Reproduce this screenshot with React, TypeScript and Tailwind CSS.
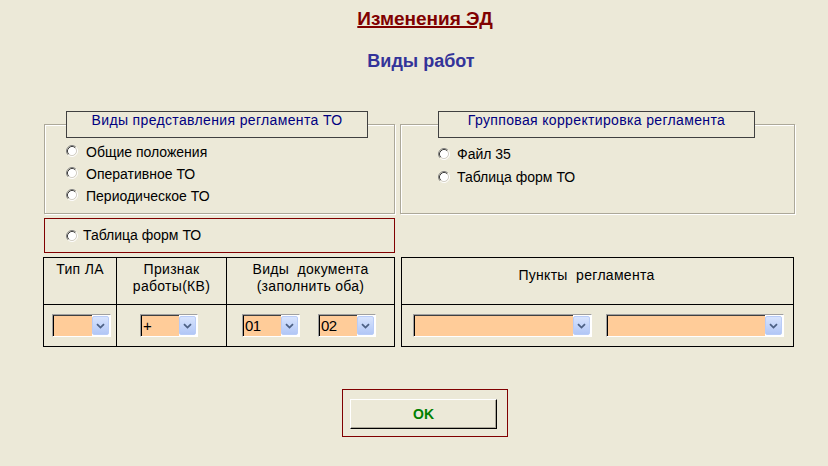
import React from 'react';

// Classic XP-like radio button
const Radio = ({ className = '' }: { className?: string }) => (
    <svg width="12" height="12" viewBox="0 0 12 12" className={`shrink-0 ${className}`}>
        <circle cx="6" cy="6" r="4.2" fill="#fff" />
        <path d="M2.11 9.89 A5.5 5.5 0 0 1 9.89 2.11" fill="none" stroke="#808080" />
        <path d="M9.89 2.11 A5.5 5.5 0 0 1 2.11 9.89" fill="none" stroke="#fff" />
        <path d="M2.82 9.18 A4.5 4.5 0 0 1 9.18 2.82" fill="none" stroke="#404040" />
        <path d="M9.18 2.82 A4.5 4.5 0 0 1 2.82 9.18" fill="none" stroke="#D4D0C8" />
    </svg>
);

// Combo box with peach field and blue drop button
const Combo = ({ w, value = '' }: { w: string; value?: string }) => (
    <div className={`flex h-[23px] ${w} border border-t-[#A0A0A0] border-l-[#A0A0A0] border-b-white border-r-white bg-white`}>
        <div className="flex-1 bg-[#FFCC99] border-t border-l border-t-[#404040] border-l-black pl-px text-[15px] leading-[20px] tracking-[-0.5px] text-black overflow-hidden">
            {value}
        </div>
        <div className="w-[17px] my-px mr-px flex items-center justify-center rounded-[2px] border border-[#B9CCF7] bg-linear-to-b from-[#D8E4FD] to-[#B2C7F6]">
            <svg width="9" height="6" viewBox="0 0 9 6">
                <path d="M1 1.2 L4.5 4.6 L8 1.2" fill="none" stroke="#4D6185" strokeWidth="1.8" />
            </svg>
        </div>
    </div>
);

const cell = 'bg-[#ECE9D8]';

export default function App() {
    return (
        <div className="w-[828px] h-[466px] overflow-hidden bg-[#ECE9D8] font-['Liberation_Sans',Arial,sans-serif] text-black">
            <div className="ml-[44px] w-[762px]">
                {/* Titles */}
                <div className="pt-[8px] text-center text-[19px] leading-[21px] font-bold text-[#800000]">
                    <span className="underline decoration-2 underline-offset-[1px] decoration-[#800000]">Изменения ЭД</span>
                </div>
                <div className="mt-[22px] pr-[8px] text-center text-[18px] leading-[21px] font-bold text-[#333399]">
                    Виды работ
                </div>

                <div className="mt-[39px] grid grid-cols-[351px_395px] gap-x-[5px] gap-y-[4px] text-[14px]">
                    {/* Left group */}
                    <fieldset className="border border-[#ACA899] shadow-[inset_1px_1px_0_#fff,1px_1px_0_#fff]">
                        <legend className="ml-[21px] w-[302px] h-[27px] border border-[#404040] bg-[#ECE9D8] text-left">
                            <div className="text-center text-[14px] leading-[17px] tracking-[0.35px] text-[#000080]">Виды представления регламента ТО</div>
                        </legend>
                        <div className="pl-[21px] pt-[3px] pb-[6px] leading-[22px]">
                            {['Общие положения', 'Оперативное ТО', 'Периодическое ТО'].map((t) => (
                                <div key={t} className="flex items-center gap-[8px]">
                                    <Radio className="mb-[2px]" />
                                    <span>{t}</span>
                                </div>
                            ))}
                        </div>
                    </fieldset>

                    {/* Right group */}
                    <fieldset className="border border-[#ACA899] shadow-[inset_1px_1px_0_#fff,1px_1px_0_#fff]">
                        <legend className="ml-[37px] w-[317px] h-[27px] border border-[#404040] bg-[#ECE9D8] text-left">
                            <div className="text-center text-[14px] leading-[17px] tracking-[0.35px] text-[#000080]">Групповая корректировка регламента</div>
                        </legend>
                        <div className="pl-[37px] pt-[5px] leading-[23px]">
                            {['Файл 35', 'Таблица форм ТО'].map((t) => (
                                <div key={t} className="flex items-center gap-[7px]">
                                    <Radio className="mb-[2px]" />
                                    <span>{t}</span>
                                </div>
                            ))}
                        </div>
                    </fieldset>

                    {/* Single option box */}
                    <div className="h-[35px] border border-[#800000] flex items-center gap-[5px] pl-[21px]">
                        <Radio />
                        <span>Таблица форм ТО</span>
                    </div>
                    <div />

                    {/* Left table */}
                    <div className="-ml-px w-[352px] grid grid-cols-[72px_109px_167px] grid-rows-[46px_41px] gap-px bg-black border border-black leading-[17px]">
                        <div className={`${cell} text-center pt-[3px] tracking-[0.3px]`}>Тип ЛА</div>
                        <div className={`${cell} text-center pt-[3px] tracking-[0.3px]`}>
                            Признак
                            <br />
                            работы(КВ)
                        </div>
                        <div className={`${cell} text-center pt-[3px] tracking-[0.3px] whitespace-pre`}>
                            {'Виды  документа\n(заполнить оба)'}
                        </div>
                        <div className={`${cell} flex items-center pl-[8px]`}>
                            <Combo w="w-[59px]" />
                        </div>
                        <div className={`${cell} flex items-center pl-[23px]`}>
                            <Combo w="w-[58px]" value="+" />
                        </div>
                        <div className={`${cell} flex items-center pl-[15px] gap-[18px]`}>
                            <Combo w="w-[58px]" value="01" />
                            <Combo w="w-[58px]" value="02" />
                        </div>
                    </div>

                    {/* Right table */}
                    <div className="ml-px w-[393px] grid grid-rows-[46px_41px] gap-px bg-black border border-black leading-[17px]">
                        <div className={`${cell} text-center pt-[9px] pr-[22px] tracking-[0.3px] whitespace-pre`}>{'Пункты  регламента'}</div>
                        <div className={`${cell} flex items-center pl-[11px] gap-[14px]`}>
                            <Combo w="w-[179px]" />
                            <Combo w="w-[178px]" />
                        </div>
                    </div>
                </div>

                {/* OK */}
                <div className="mx-auto mt-[42px] w-[166px] h-[48px] border border-[#800000] pl-[7px] pt-[9px]">
                    <button className="w-[147px] h-[30px] border border-t-white border-l-white border-r-black border-b-black shadow-[inset_-1px_-1px_0_#ACA899] text-[14px] font-bold text-[#008000]">
                        OK
                    </button>
                </div>
            </div>
        </div>
    );
}
